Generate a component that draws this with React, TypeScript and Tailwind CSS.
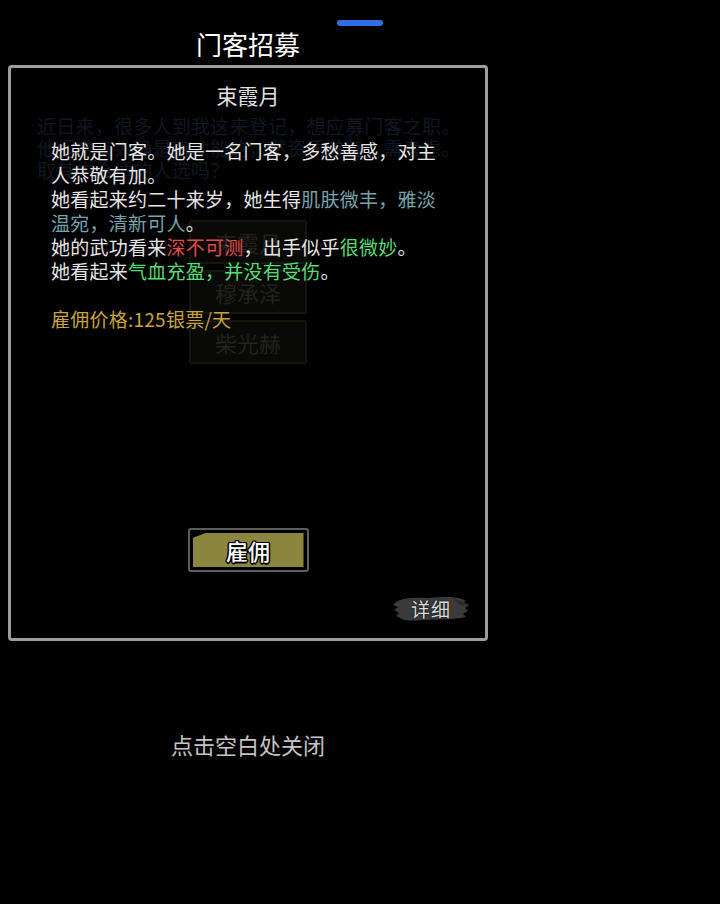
import React from "react";

const FONT = "font-['Noto_Sans_CJK_SC','Noto_Sans',sans-serif]";

// Dimmed list of candidates from the screen underneath the dialog
function BackdropScreen() {
  const names = ["束霞月", "穆承泽", "柴光赫"];
  return (
    <div className="absolute inset-0 flex flex-col pointer-events-none">
      <div className="mt-[47px] ml-[26px] w-[430px] text-[19px] leading-[22px] tracking-[0.25px] text-[#111823] [text-spacing-trim:space-all]">
        <p>近日来，很多人到我这来登记，想应募门客之职。</p>
        <p>他们中有人确是有才能的，然资质参差，需考虑。</p>
        <p>取其中合适的人选吗？</p>
      </div>
      <div className="mt-[39px] flex flex-col items-center gap-[6px]">
        {names.map((n) => (
          <div
            key={n}
            className="w-[118px] h-[44px] border-2 border-[#16160f] bg-[#090907] rounded-[2px] flex items-center justify-center text-[22px] text-[#22221b]"
          >
            {n}
          </div>
        ))}
      </div>
    </div>
  );
}

function HireButton() {
  return (
    <div className="w-[121px] h-[44px] border-2 border-[#5d5d5d] rounded-[3px] bg-black p-[3px] flex">
      <div className="relative flex-1 bg-[#8a8640] [clip-path:polygon(13px_0,100%_0,100%_100%,0_100%,0_5px)] flex items-center justify-center">
        <span className="text-[22px] leading-none font-medium text-white [text-shadow:1.5px_0_0_#000,-1.5px_0_0_#000,0_1.5px_0_#000,0_-1.5px_0_#000,1px_1px_0_#000,-1px_-1px_0_#000,1px_-1px_0_#000,-1px_1px_0_#000]">
          雇佣
        </span>
      </div>
    </div>
  );
}

function DetailTag() {
  return (
    <div className="relative w-[78px] h-[27px] flex items-center justify-center">
      <svg
        className="absolute inset-0"
        width="78"
        height="27"
        viewBox="0 0 78 27"
      >
        {/* ink brush stroke */}
        <path
          d="M3 8 C8 3 20 2 34 3 C48 2 62 1 70 4 L74 6 L71 8 L77 10 L73 13 L76 16 L71 19 L74 22 C62 25 46 24 30 25 C20 26 12 26 8 23 L4 21 L7 18 L2 15 L6 12 L1 10 Z"
          fill="#3a3a3a"
        />
        <path d="M60 3 L76 9 L70 11 Z" fill="#2c2c2c" />
      </svg>
      <span className="relative text-[19px] leading-none text-[#dcdcdc] tracking-[1px] [text-shadow:0_0_2px_#000]">
        详细
      </span>
    </div>
  );
}

export default function App() {
  return (
    <div className={`w-[720px] h-[904px] bg-black overflow-hidden flex flex-col ${FONT}`}>
      {/* top drag handle */}
      <div className="pt-[20px] flex justify-center">
        <div className="w-[46px] h-[6px] rounded-full bg-[#2f6fe3]" />
      </div>

      <div className="ml-[8px] w-[480px] flex flex-col items-center">
        <h1 className="mt-[3px] text-[26px] leading-[30px] text-white">门客招募</h1>

        <div className="relative mt-[6px] w-[480px] h-[576px] border-[3px] border-[#9d9d9d] rounded-[4px] flex flex-col">
          <BackdropScreen />

          <div className="relative flex flex-col flex-1 pt-[13px] pb-[16px]">
            <div className="text-center text-[21px] leading-[28px] text-[#e0e0e0]">束霞月</div>

            <div className="mt-[30px] ml-[40px] w-[392px] text-[19px] leading-[24px] tracking-[0.25px] text-[#e6e6e6] [text-spacing-trim:space-all]">
              <p>她就是门客。她是一名门客，多愁善感，对主人恭敬有加。</p>
              <p>
                她看起来约二十来岁，她生得
                <span className="text-[#76a4ab]">肌肤微丰，雅淡温宛，清新可人</span>。
              </p>
              <p>
                她的武功看来<span className="text-[#e04a4a]">深不可测</span>，出手似乎
                <span className="text-[#55dd73]">很微妙</span>。
              </p>
              <p>
                她看起来<span className="text-[#55dd73]">气血充盈，并没有受伤</span>。
              </p>
              <p className="mt-[24px] text-[#c9a43e]">雇佣价格:125银票/天</p>
            </div>

            <div className="flex-1" />

            <div className="flex justify-center">
              <HireButton />
            </div>

            <div className="mt-[23px] self-end mr-[15px]">
              <DetailTag />
            </div>
          </div>
        </div>

        <p className="mt-[88px] text-[22px] leading-[30px] text-[#c4c4c4]">点击空白处关闭</p>
      </div>
    </div>
  );
}
